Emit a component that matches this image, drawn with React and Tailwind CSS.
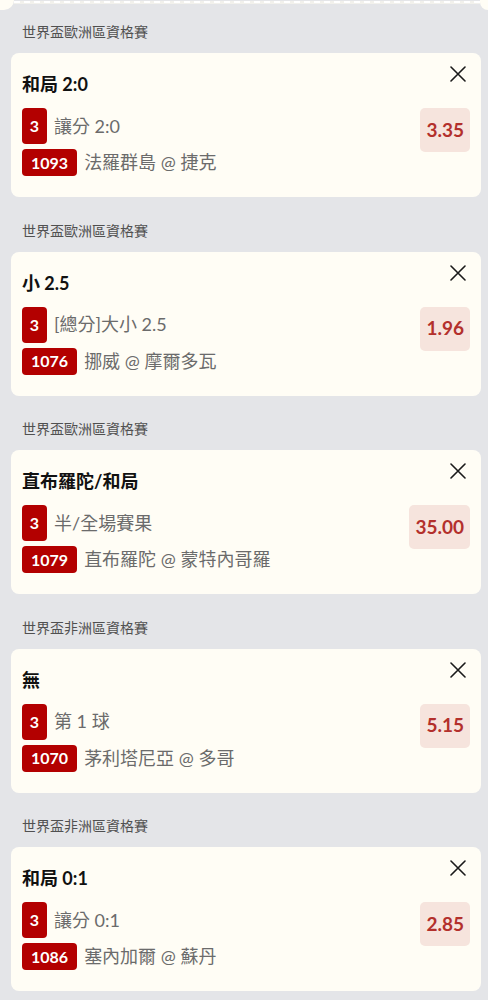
const bets = [
  { league: "世界盃歐洲區資格賽", pick: "和局 2:0", market: "讓分 2:0", no: "1093", match: "法羅群島 @ 捷克", odds: "3.35" },
  { league: "世界盃歐洲區資格賽", pick: "小 2.5", market: "[總分]大小 2.5", no: "1076", match: "挪威 @ 摩爾多瓦", odds: "1.96" },
  { league: "世界盃歐洲區資格賽", pick: "直布羅陀/和局", market: "半/全場賽果", no: "1079", match: "直布羅陀 @ 蒙特內哥羅", odds: "35.00" },
  { league: "世界盃非洲區資格賽", pick: "無", market: "第 1 球", no: "1070", match: "茅利塔尼亞 @ 多哥", odds: "5.15" },
  { league: "世界盃非洲區資格賽", pick: "和局 0:1", market: "讓分 0:1", no: "1086", match: "塞內加爾 @ 蘇丹", odds: "2.85" },
];

function CloseIcon() {
  return (
    <svg width="16" height="16" viewBox="0 0 16 16" fill="none" stroke="#1a1a1a" strokeWidth="1.6" strokeLinecap="round">
      <path d="M1 1L15 15M15 1L1 15" />
    </svg>
  );
}

function BetCard({ bet }) {
  return (
    <div className="ml-[11px] mr-[7px] rounded-[8px] bg-[#fffdf5] pt-[13px] pb-[21px] px-[11px]">
      <div className="flex items-start justify-between">
        <div className="mt-[5px] text-[18px] leading-[26px] font-bold text-[#111]">{bet.pick}</div>
        <div className="mr-[4px]">
          <CloseIcon />
        </div>
      </div>
      <div className="mt-[11px] flex items-start justify-between">
        <div className="flex flex-col gap-[5px]">
          <div className="flex items-center gap-[7px] h-[36px]">
            <span className="flex h-[36px] w-[25px] items-center justify-center rounded-[4px] bg-[#b30000] text-[16px] font-bold text-white">
              3
            </span>
            <span className="text-[18px] text-[#6b6b6b]">{bet.market}</span>
          </div>
          <div className="flex items-center gap-[7px] h-[27px]">
            <span className="flex h-[27px] items-center rounded-[4px] bg-[#b30000] px-[9px] text-[16px] font-bold text-white">
              {bet.no}
            </span>
            <span className="text-[18px] text-[#6b6b6b]">{bet.match}</span>
          </div>
        </div>
        <div className="flex h-[44px] items-center rounded-[5px] bg-[#f6e4dd] px-[6px] text-[19px] font-bold text-[#b3302c]">
          {bet.odds}
        </div>
      </div>
    </div>
  );
}

export default function App() {
  return (
    <div
      className="min-h-[1000px] w-[488px] bg-[#e4e5e8] pb-[9px]"
      style={{ fontFamily: "Lato, 'Noto Sans CJK TC', sans-serif" }}
    >
      <div className="flex h-[9px]">
        <div className="h-[10px] w-[14px] rounded-br-[12px] bg-[#fffdf5]"></div>
        <div className="mt-[1px] h-[3px] flex-1 border-t-2 border-dashed border-white bg-[#f2f1ec]"></div>
        <div className="h-[10px] w-[8px] rounded-bl-[10px] bg-[#fffdf5]"></div>
      </div>
      {bets.map((b, i) => (
        <div key={i}>
          <div className={`${i === 0 ? "pt-[13px]" : "pt-[23.5px]"} pb-[11px] pl-[22px] text-[14px] leading-[20px] text-[#505050]`}>
            {b.league}
          </div>
          <BetCard bet={b} />
        </div>
      ))}
    </div>
  );
}
